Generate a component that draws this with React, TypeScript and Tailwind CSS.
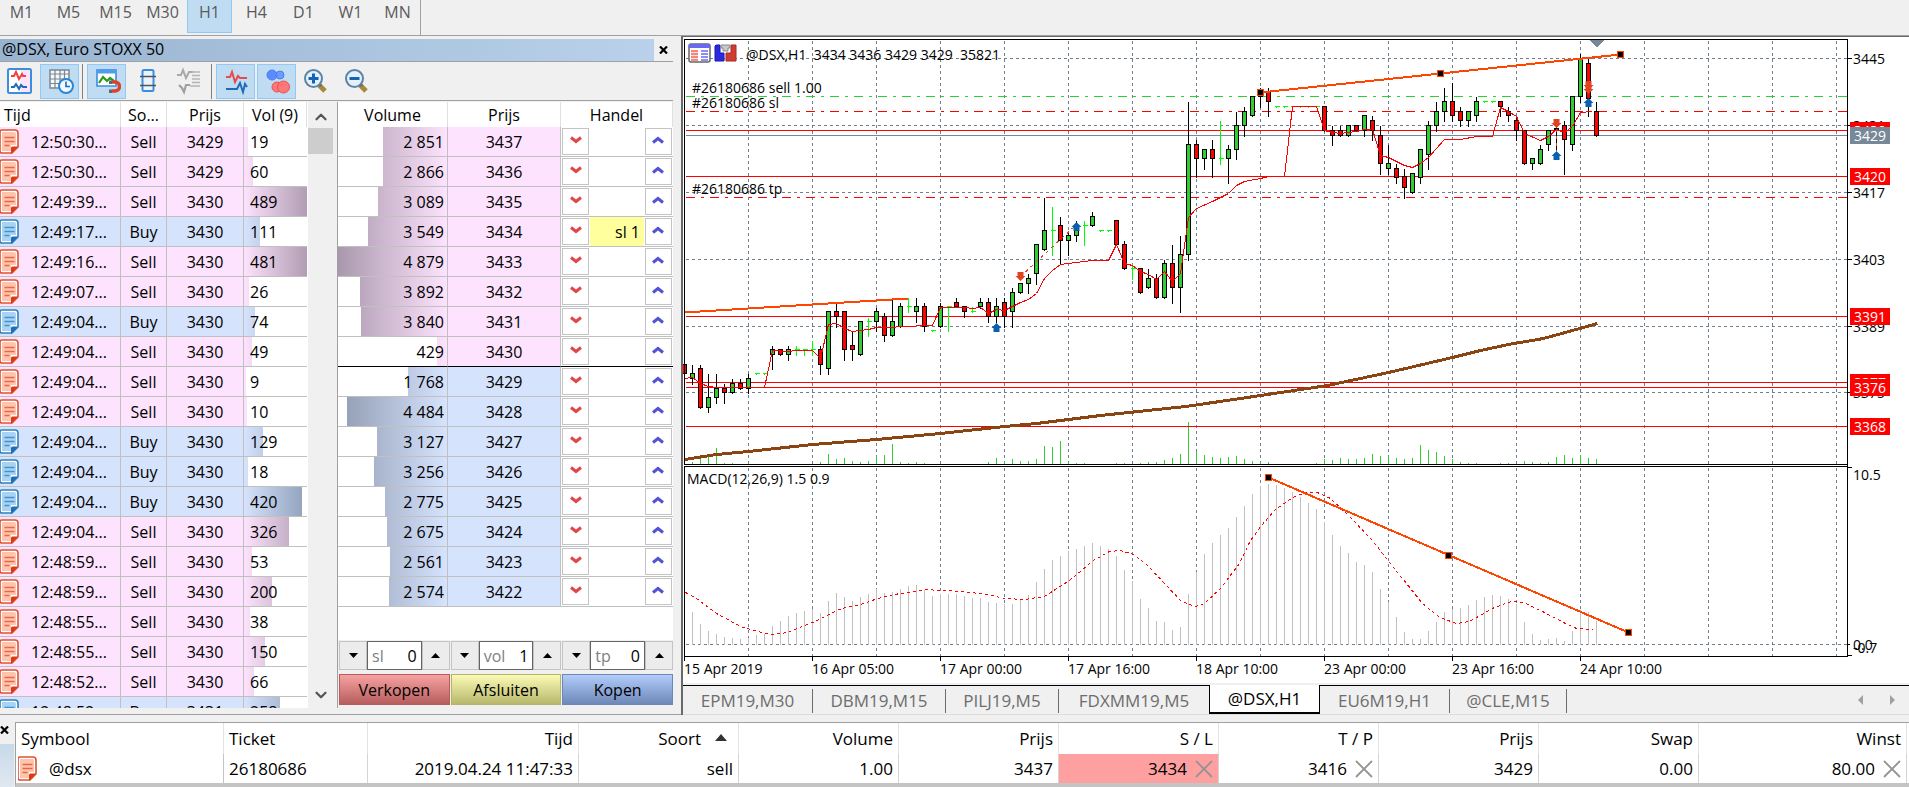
import { ChevronDown, ChevronUp } from 'lucide-react'

type Side = 'Sell' | 'Buy'
type Trade = [time: string, side: Side, price: number, volume: number]

const timeframes = ['M1', 'M5', 'M15', 'M30', 'H1', 'H4', 'D1', 'W1', 'MN']

const trades: Trade[] = [
  ['12:50:30...', 'Sell', 3429, 19],
  ['12:50:30...', 'Sell', 3429, 60],
  ['12:49:39...', 'Sell', 3430, 489],
  ['12:49:17...', 'Buy', 3430, 111],
  ['12:49:16...', 'Sell', 3430, 481],
  ['12:49:07...', 'Sell', 3430, 26],
  ['12:49:04...', 'Buy', 3430, 74],
  ['12:49:04...', 'Sell', 3430, 49],
  ['12:49:04...', 'Sell', 3430, 9],
  ['12:49:04...', 'Sell', 3430, 10],
  ['12:49:04...', 'Buy', 3430, 129],
  ['12:49:04...', 'Buy', 3430, 18],
  ['12:49:04...', 'Buy', 3430, 420],
  ['12:49:04...', 'Sell', 3430, 326],
  ['12:48:59...', 'Sell', 3430, 53],
  ['12:48:59...', 'Sell', 3430, 200],
  ['12:48:55...', 'Sell', 3430, 38],
  ['12:48:55...', 'Sell', 3430, 150],
  ['12:48:52...', 'Sell', 3430, 66],
  ['12:48:52...', 'Buy', 3431, 258],
]

const depth = [
  [2851, 3437], [2866, 3436], [3089, 3435], [3549, 3434],
  [4879, 3433], [3892, 3432], [3840, 3431], [429, 3430],
  [1768, 3429], [4484, 3428], [3127, 3427], [3256, 3426],
  [2775, 3425], [2675, 3424], [2561, 3423], [2574, 3422],
]

const positionColumns = [
  { title: 'Symbool', width: 'w-[208px]', align: 'text-left' },
  { title: 'Ticket', width: 'w-[144px]', align: 'text-left' },
  { title: 'Tijd', width: 'w-[211px]', align: 'text-right' },
  { title: 'Soort', width: 'w-[160px]', align: 'text-right' },
  { title: 'Volume', width: 'w-[160px]', align: 'text-right' },
  { title: 'Prijs', width: 'w-[160px]', align: 'text-right' },
  { title: 'S / L', width: 'w-[160px]', align: 'text-right' },
  { title: 'T / P', width: 'w-[160px]', align: 'text-right' },
  { title: 'Prijs', width: 'w-[160px]', align: 'text-right' },
  { title: 'Swap', width: 'w-[160px]', align: 'text-right' },
  { title: 'Winst', width: 'w-[208px]', align: 'text-right' },
]

const chartTabs = [
  { name: 'EPM19,M30', width: 'w-[130px]' },
  { name: 'DBM19,M15', width: 'w-[133px]' },
  { name: 'PILJ19,M5', width: 'w-[113px]' },
  { name: 'FDXMM19,M5', width: 'w-[150px]' },
  { name: '@DSX,H1', width: 'w-[111px]' },
  { name: 'EU6M19,H1', width: 'w-[130px]' },
  { name: '@CLE,M15', width: 'w-[117px]' },
]

// bar index, type, high, low, body top, body bottom
// type: u = up, d = down, n = open equals close
type Candle = [number, 'u' | 'd' | 'n', number, number, number, number]

const candles: Candle[] = [
  [0, 'd', 364, 374, 364, 374], [1, 'u', 364, 384, 373, 379], [2, 'd', 364, 408, 368, 408],
  [3, 'u', 373, 412, 397, 408], [4, 'u', 373, 403, 388, 398], [5, 'd', 383, 403, 388, 393],
  [6, 'u', 378, 393, 383, 393], [7, 'd', 378, 389, 383, 389], [8, 'u', 373, 393, 378, 389],
  [9, 'n', 373, 374, 373, 373], [10, 'n', 373, 374, 373, 373], [11, 'u', 345, 369, 349, 355],
  [12, 'd', 349, 355, 349, 355], [13, 'u', 345, 360, 349, 355], [14, 'n', 345, 355, 349, 349],
  [15, 'n', 349, 355, 349, 349], [16, 'n', 340, 355, 349, 349], [17, 'd', 345, 374, 349, 365],
  [18, 'u', 311, 374, 311, 369], [19, 'd', 302, 327, 311, 317], [20, 'd', 311, 360, 311, 350],
  [21, 'd', 330, 360, 345, 350], [22, 'u', 321, 355, 321, 355], [23, 'n', 317, 336, 321, 321],
  [24, 'u', 307, 331, 311, 322], [25, 'd', 312, 341, 316, 336], [26, 'u', 297, 336, 321, 336],
  [27, 'u', 302, 327, 306, 327], [28, 'n', 297, 312, 306, 306], [29, 'u', 297, 322, 306, 312],
  [30, 'd', 302, 331, 306, 327], [31, 'n', 330, 331, 330, 330], [32, 'u', 302, 327, 306, 327],
  [33, 'n', 306, 331, 306, 306], [34, 'd', 297, 307, 302, 307], [35, 'd', 306, 317, 306, 312],
  [36, 'n', 306, 312, 311, 311], [37, 'u', 297, 308, 302, 307], [38, 'd', 297, 322, 302, 317],
  [39, 'u', 297, 322, 306, 317], [40, 'd', 297, 327, 302, 317], [41, 'u', 287, 327, 292, 312],
  [42, 'u', 283, 293, 283, 293], [43, 'u', 273, 293, 278, 284], [44, 'u', 244, 284, 244, 274],
  [45, 'u', 197, 250, 230, 250], [46, 'n', 206, 255, 230, 230], [47, 'd', 216, 264, 225, 241],
  [48, 'u', 230, 255, 235, 241], [49, 'u', 220, 241, 230, 236], [50, 'n', 220, 245, 225, 225],
  [51, 'u', 211, 226, 216, 226], [52, 'n', 230, 231, 230, 230], [53, 'n', 230, 231, 230, 230],
  [54, 'd', 220, 245, 220, 245], [55, 'd', 240, 269, 244, 269], [56, 'n', 263, 279, 268, 268],
  [57, 'd', 268, 293, 268, 293], [58, 'u', 268, 288, 278, 288], [59, 'd', 273, 298, 278, 298],
  [60, 'u', 259, 298, 263, 298], [61, 'd', 244, 303, 263, 288], [62, 'u', 235, 312, 254, 288],
  [63, 'u', 101, 260, 144, 255], [64, 'd', 139, 177, 144, 159], [65, 'u', 149, 169, 149, 159],
  [66, 'd', 139, 177, 149, 159], [67, 'n', 120, 164, 158, 158], [68, 'u', 144, 183, 149, 159],
  [69, 'u', 111, 159, 125, 150], [70, 'u', 106, 136, 111, 126], [71, 'u', 96, 116, 96, 116],
  [72, 'u', 87, 107, 92, 97], [73, 'd', 87, 116, 92, 102], [74, 'n', 106, 107, 106, 106],
  [75, 'n', 106, 107, 106, 106], [76, 'n', 106, 107, 106, 106], [77, 'n', 106, 107, 106, 106],
  [78, 'n', 106, 107, 106, 106], [79, 'n', 106, 107, 106, 106], [80, 'd', 106, 131, 106, 131],
  [81, 'd', 125, 145, 130, 136], [82, 'd', 125, 136, 130, 136], [83, 'u', 125, 136, 125, 136],
  [84, 'd', 125, 131, 125, 131], [85, 'u', 115, 136, 115, 131], [86, 'd', 115, 140, 120, 131],
  [87, 'd', 125, 174, 135, 164], [88, 'u', 144, 174, 163, 169], [89, 'd', 163, 183, 168, 178],
  [90, 'd', 168, 198, 176, 188], [91, 'u', 173, 193, 173, 193], [92, 'u', 149, 183, 149, 178],
  [93, 'u', 120, 169, 125, 155], [94, 'u', 101, 131, 111, 126], [95, 'u', 87, 121, 101, 112],
  [96, 'd', 82, 121, 101, 116], [97, 'd', 106, 126, 111, 121], [98, 'u', 111, 126, 111, 121],
  [99, 'u', 96, 121, 101, 116], [100, 'n', 101, 102, 101, 101], [101, 'n', 101, 102, 101, 101],
  [102, 'd', 101, 116, 101, 107], [103, 'd', 106, 121, 111, 116], [104, 'd', 115, 140, 120, 131],
  [105, 'd', 130, 164, 130, 164], [106, 'u', 158, 169, 158, 164], [107, 'u', 144, 164, 149, 164],
  [108, 'u', 130, 150, 130, 145], [109, 'd', 126, 150, 128, 130], [110, 'd', 120, 174, 125, 140],
  [111, 'u', 96, 150, 96, 145], [112, 'u', 53, 102, 58, 97], [113, 'd', 58, 116, 63, 99],
  [114, 'd', 101, 136, 111, 136],
]

// tick volume heights per bar
const volumes = [
  0, 2, 6, 10, 16, 1, 1, 0, 1, 0, 0, 0, 0, 0, 0, 0, 0, 2, 10, 5, 6, 3, 2, 3, 8, 9, 20, 2, 1, 2, 1, 0,
  0, 0, 0, 0, 0, 0, 2, 6, 3, 5, 3, 3, 5, 18, 17, 23, 2, 1, 1, 0, 0, 0, 1, 1, 0, 1, 2, 2, 4, 6, 10, 42, 12,
  9, 7, 6, 7, 8, 5, 3, 2, 2, 0, 0, 0, 0, 0, 1, 5, 4, 6, 5, 5, 6, 10, 8, 7, 6, 5, 6, 19, 14, 12, 8, 5, 2, 1,
  1, 0, 0, 1, 1, 0, 3, 2, 1, 2, 7, 9, 6, 9, 6, 5,
]

// top of each MACD column
const macd = [
  0, 611, 623, 630, 633, 636, 637, 638, 637, 634, 633, 625, 620, 615, 612, 610, 608, 612, 600, 592, 596,
  600, 596, 593, 588, 592, 591, 588, 585, 584, 589, 595, 593, 593, 593, 595, 597, 597, 601, 602, 603, 603,
  599, 594, 581, 568, 559, 555, 550, 548, 545, 542, 545, 548, 555, 569, 580, 598, 607, 620, 621, 629, 626,
  593, 571, 553, 542, 534, 527, 516, 505, 493, 485, 483, 484, 487, 491, 496, 502, 508, 521, 534, 545, 552,
  561, 564, 571, 588, 601, 616, 631, 638, 638, 630, 621, 611, 608, 607, 604, 599, 596, 594, 595, 598, 603,
  621, 633, 639, 638, 637, 640, 630, 609, 611, 620,
]

const fastLine =
  '684,378 692,377 700,383 708,386 716,387 764,387 772,350 788,351 796,350 812,350 820,358 828,324 836,323 844,328 852,331 868,329 876,327 892,327 900,326 932,325 940,307 964,307 972,308 980,307 988,313 996,309 1004,310 1012,306 1020,302 1028,299 1036,293 1044,278 1052,270 1060,264 1076,262 1092,260 1108,260 1116,244 1124,263 1132,265 1140,271 1148,274 1156,279 1164,271 1172,281 1180,273 1188,217 1196,208 1212,201 1228,193 1236,185 1244,181 1260,178 1268,176 1284,176 1292,106 1316,106 1324,130 1332,132 1340,133 1356,131 1364,129 1372,129 1380,155 1388,157 1404,165 1412,167 1420,163 1428,157 1436,148 1444,139 1460,139 1476,136 1492,136 1500,107 1508,111 1516,116 1524,133 1540,140 1548,136 1556,129 1564,132 1572,126 1580,112 1592,111'

const slowLine =
  '684,459 716,454 748,451 812,444 876,439 940,433 1004,426 1036,423 1100,415 1185,406 1240,398 1327,385 1388,372 1452,357 1480,350 1508,344 1543,338 1572,330 1597,323'

const signalLine =
  '685,592 696,598 716,613 740,626 757,631 772,634 787,632 812,622 841,608 864,603 877,598 894,594 925,589 940,590 963,591 986,594 1005,598 1024,599 1044,596 1069,580 1093,560 1109,551 1120,550 1133,554 1147,565 1166,585 1181,601 1195,606 1204,603 1220,588 1239,563 1250,540 1261,525 1275,509 1292,497 1305,492 1317,492 1330,498 1351,518 1372,540 1389,562 1406,583 1422,603 1439,617 1456,623 1469,621 1494,607 1511,601 1523,602 1544,612 1565,623 1576,628 1593,629'

const gridX = Array.from({ length: 18 }, (_, i) => 748 + i * 64)
const gridY = [58, 125, 192, 259, 326, 392]
const levels = [130, 176, 316, 382, 387, 426]

const timeLabels = [
  [684, '15 Apr 2019'], [812, '16 Apr 05:00'], [940, '17 Apr 00:00'], [1068, '17 Apr 16:00'],
  [1196, '18 Apr 10:00'], [1324, '23 Apr 00:00'], [1452, '23 Apr 16:00'], [1580, '24 Apr 10:00'],
] as const

const barX = (i: number) => 684 + i * 8

function formatVolume(v: number) {
  return v < 1000 ? String(v) : `${Math.floor(v / 1000)} ${String(v % 1000).padStart(3, '0')}`
}

function PaperIcon({ side }: { side: Side }) {
  const c = side === 'Sell'
    ? { line: '#e0522f', fill: '#ffc4ae', fold: '#d93a12' }
    : { line: '#2f80c0', fill: '#a9d3f5', fold: '#1d6fb5' }
  return (
    <svg width="19" height="26" viewBox="0 0 19 26" className="block shrink-0" aria-hidden="true">
      <path d="M2 1h13a3 3 0 0 1 3 3v14l-6 6H2a2 2 0 0 1-2-2V3a2 2 0 0 1 2-2z" fill="#fff" stroke={c.line} strokeWidth="1.6" />
      <path d="M2 3h12a2 2 0 0 1 2 2v11h-5v6H2z" fill={c.fill} />
      <path d="M4.500 8.500h10M4.500 12.500h10M4.500 16.500h5" stroke={c.line} strokeWidth="1.600" opacity=".8" />
      <path d="M18 17.500h-5.500a1.500 1.500 0 0 0-1.500 1.500V25z" fill={c.fold} />
    </svg>
  )
}

function CloseGlyph() {
  return (
    <svg width="9" height="8" viewBox="0 0 9 8" aria-hidden="true">
      <path d="M1 0.500l7 7M8 0.500l-7 7" stroke="#000" strokeWidth="2.200" />
    </svg>
  )
}

function RemoveGlyph() {
  return (
    <svg width="18" height="18" viewBox="0 0 18 18" className="shrink-0" aria-hidden="true">
      <path d="M1 1l16 16M17 1L1 17" stroke="#949494" strokeWidth="1.800" />
    </svg>
  )
}

function ToolButton({ label, active, children }: { label: string; active?: boolean; children: React.ReactNode }) {
  return (
    <button
      aria-label={label}
      className={`flex h-[35px] w-[39px] items-center justify-center border ${active ? 'border-[#90c8f6] bg-[#c0dcf3]' : 'border-transparent'}`}
    >
      <svg width="28" height="28" viewBox="0 0 28 28" fill="none" aria-hidden="true">
        {children}
      </svg>
    </button>
  )
}

function Magnifier({ plus }: { plus?: boolean }) {
  return (
    <>
      <path d="M17 18l6 6" stroke="#a58a3c" strokeWidth="5" />
      <path d="M16 16l3 3" stroke="#666" strokeWidth="3" />
      <circle cx="11.500" cy="11.500" r="8.500" fill="#e4f1fc" stroke="#5d83a8" strokeWidth="2" />
      <path d={plus ? 'M6.500 11.500h10M11.500 6.500v10' : 'M6.500 11.500h10'} stroke="#1464b4" strokeWidth="3" />
    </>
  )
}

function DepthToolbar() {
  return (
    <div className="flex h-[38px] items-center">
      <ToolButton label="Tickgrafiek">
        <rect x="2" y="2" width="23" height="24" rx="1.500" fill="#fff" stroke="#3b8de0" strokeWidth="2" />
        <path d="M15 3h9v22h-9z" fill="#fde3fd" />
        <path d="M5 9h3l2-4 3 7 3-5 1 2h3" stroke="#f04040" strokeWidth="2" />
        <path d="M5 20h3l2-3 3 5 2-4 2 2h4" stroke="#1c6cb8" strokeWidth="2" />
      </ToolButton>
      <div className="w-px" />
      <ToolButton label="Tijd en verkopen" active>
        <path d="M4 3h19v18H4z" fill="#f6f8fa" stroke="#7a8792" strokeWidth="1.500" />
        <path d="M4 7h19M4 12h19M4 16.500h19M9 3v18M14 3v18M18.500 3v18" stroke="#7a8792" strokeWidth="1.200" />
        <circle cx="20" cy="19" r="7" fill="#f2f8ff" stroke="#2a86d8" strokeWidth="2" />
        <path d="M20 14.500V19.500h4" stroke="#1c6cc0" strokeWidth="1.600" />
      </ToolButton>
      <div className="ml-[3px] mr-1 h-[35px] w-px bg-[#808080]" />
      <ToolButton label="Automatisch centreren" active>
        <path d="M4 3h19v16H4z" fill="#fff" stroke="#3b8de0" strokeWidth="1.600" />
        <path d="M4 2h19v4.500H4z" fill="#4f9cea" />
        <path d="M6 16l4-6 4 4 3-3 4 3" stroke="#2a9a1c" strokeWidth="2.200" />
        <path d="M19 15h3a4 4 0 0 1 0 9h-3" stroke="#d8432a" strokeWidth="3.500" />
        <path d="M16 13.500h3v3.500h-3zM16 22.500h3v3.500h-3z" fill="#666" />
      </ToolButton>
      <div className="w-0.5" />
      <ToolButton label="Marktdiepte">
        <rect x="8.500" y="3" width="11" height="21" rx="1.500" fill="#eaf4fe" stroke="#3b8de0" strokeWidth="2" />
        <path d="M6 9.500h16M6 18.500h16" stroke="#555" strokeWidth="1.600" />
      </ToolButton>
      <div className="w-0.5" />
      <ToolButton label="Spread">
        <path d="M2 8h4l2-5 3 8 3-6h4" stroke="#a8a8a8" strokeWidth="2" />
        <path d="M4 18l3 3 2 4 2-7h4" stroke="#a0a0a0" strokeWidth="2.200" />
        <path d="M17 5h8M17 8.500h8M17 12h8M17 15.500h8M15 19h10" stroke="#b4b4b4" strokeWidth="1.500" />
      </ToolButton>
      <div className="ml-[3px] mr-1 h-[35px] w-px bg-[#808080]" />
      <ToolButton label="Ticks" active>
        <path d="M4 10h4l2-5 3 10 3-6 2 2h7" stroke="#e84a4a" strokeWidth="2" />
        <path d="M4 22h11l3-6 3 9 2-8 2 3" stroke="#1c6cb8" strokeWidth="2" />
      </ToolButton>
      <div className="w-0.5" />
      <ToolButton label="Volumes" active>
        <circle cx="17" cy="8" r="4" fill="#6b9cff" stroke="#4a7ef0" />
        <circle cx="9" cy="8" r="5" fill="#5a8cff" stroke="#4a7ef0" />
        <circle cx="14" cy="20" r="5" fill="#ff7878" stroke="#e85050" />
        <circle cx="20.500" cy="20" r="6" fill="#ff7878" stroke="#e85050" />
      </ToolButton>
      <ToolButton label="Inzoomen"><Magnifier plus /></ToolButton>
      <div className="w-0.5" />
      <ToolButton label="Uitzoomen"><Magnifier /></ToolButton>
    </div>
  )
}

function TradeList() {
  return (
    <div className="flex w-[333px] shrink-0 overflow-hidden bg-white">
      <table className="w-[307px] table-fixed border-separate border-spacing-0 self-start">
        <thead>
          <tr className="h-[25px]">
            <th className="w-[121px] border-r border-[#e0e0e0] pl-1 text-left font-normal">Tijd</th>
            <th className="w-[46px] border-r border-[#e0e0e0] font-normal">So...</th>
            <th className="w-[77px] border-r border-[#e0e0e0] font-normal">Prijs</th>
            <th className="border-r border-[#e0e0e0] font-normal">Vol (9)</th>
          </tr>
        </thead>
        <tbody>
          {trades.map(([time, side, price, volume], i) => {
            const cell = `border-b border-r border-[#c0c0c0] ${side === 'Sell' ? 'bg-[#fde3fd]' : 'bg-[#d6e3fd]'}`
            const width = Math.min(100, volume / 4.7 + 2)
            const shade = side === 'Sell' ? '#fde3fd, #b09cb3' : '#d6e3fd, #8f9fba'
            return (
              <tr key={i} className="h-[30px]">
                <td className={cell}>
                  <span className="flex items-center">
                    <PaperIcon side={side} />
                    <span className="pl-3">{time}</span>
                  </span>
                </td>
                <td className={`${cell} text-center`}>{side}</td>
                <td className={`${cell} text-center`}>{price}</td>
                <td
                  className="border-b border-[#c0c0c0] pl-1.5"
                  style={{ backgroundImage: `linear-gradient(90deg, transparent ${width}%, #fff ${width}%), linear-gradient(90deg, ${shade})` }}
                >
                  {volume}
                </td>
              </tr>
            )
          })}
        </tbody>
      </table>
      <div className="ml-px flex flex-1 flex-col items-center bg-[#f0f0f0]">
        <button aria-label="Omhoog" className="flex h-[26px] items-center pt-1"><ChevronUp size={18} strokeWidth={3} color="#555" /></button>
        <div className="h-[26px] w-full bg-[#cdcdcd]" />
        <div className="flex-1" />
        <button aria-label="Omlaag" className="flex h-[26px] items-center"><ChevronDown size={18} strokeWidth={3} color="#555" /></button>
      </div>
    </div>
  )
}

function Spinner({ name, value }: { name: string; value: string }) {
  const arrow = 'flex w-7 items-center justify-center border border-[#c4c4c4] bg-[#ececec]'
  return (
    <div className="flex h-[29px] flex-1">
      <button aria-label={`${name} lager`} className={arrow}>
        <svg width="9" height="5" viewBox="0 0 9 5"><path d="M0 0h9L4.500 5z" /></svg>
      </button>
      <label className="flex min-w-0 flex-1 items-center border border-[#646464] bg-white px-1 text-[#808080]">
        {name}
        <input defaultValue={value} className="w-full min-w-0 bg-transparent text-right text-black outline-none" />
      </label>
      <button aria-label={`${name} hoger`} className={arrow}>
        <svg width="9" height="5" viewBox="0 0 9 5"><path d="M0 5h9L4.500 0z" /></svg>
      </button>
    </div>
  )
}

function DepthOfMarket() {
  return (
    <div className="flex min-w-0 flex-1 flex-col border-l border-[#a0a0a0] bg-white">
      <table className="w-full table-fixed border-separate border-spacing-0">
        <colgroup>
          <col className="w-[110px]" />
          <col className="w-[113px]" />
          <col className="w-[29px]" />
          <col />
          <col className="w-[29px]" />
        </colgroup>
        <thead>
          <tr className="h-[25px]">
            <th className="border-r border-[#e0e0e0] font-normal">Volume</th>
            <th className="border-r border-[#e0e0e0] font-normal">Prijs</th>
            <th colSpan={3} className="border-r border-[#e0e0e0] font-normal">Handel</th>
          </tr>
        </thead>
        <tbody>
          {depth.map(([volume, price], i) => {
            const ask = i < 8
            const line = i === 7 ? 'border-b border-b-black' : 'border-b border-b-[#c0c0c0]'
            const rest = 100 - (volume / 4879) * 100
            const shade = ask ? '#a998ad, #fde3fd' : '#919cb2, #d6e3fd'
            return (
              <tr key={price} className="h-[30px]">
                <td
                  className={`${line} border-r border-r-[#c0c0c0] pr-[3px] text-right`}
                  style={{ backgroundImage: `linear-gradient(90deg, #fff ${rest}%, transparent ${rest}%), linear-gradient(90deg, ${shade})` }}
                >
                  {formatVolume(volume)}
                </td>
                <td className={`${line} border-r border-r-[#c0c0c0] text-center ${ask ? 'bg-[#fde3fd]' : 'bg-[#d6e3fd]'}`}>{price}</td>
                <td className={`${line} pl-px`}>
                  <button aria-label={`Verkopen op ${price}`} className="flex h-[27px] w-[27px] items-center justify-center border border-[#c4c4c4] pb-1">
                    <svg width="12" height="8" viewBox="0 0 12 8" fill="none"><path d="M1 1.500l5 4 5-4" stroke="#e04848" strokeWidth="3" /></svg>
                  </button>
                </td>
                <td className={`${line} pr-1 text-right ${price === 3434 ? 'bg-[#ffff9e]' : ''}`}>{price === 3434 ? 'sl 1' : ''}</td>
                <td className={`${line} pl-px`}>
                  <button aria-label={`Kopen op ${price}`} className="flex h-[27px] w-[27px] items-center justify-center border border-[#c4c4c4] pb-1">
                    <svg width="12" height="8" viewBox="0 0 12 8" fill="none"><path d="M1 6.500l5-4 5 4" stroke="#5252d4" strokeWidth="3" /></svg>
                  </button>
                </td>
              </tr>
            )
          })}
        </tbody>
      </table>
      <div className="flex-1" />
      <div className="flex flex-col gap-1 bg-[#f0f0f0] pb-[3px] pl-px pt-px">
        <div className="flex gap-px">
          <Spinner name="sl" value="0" />
          <Spinner name="vol" value="1" />
          <Spinner name="tp" value="0" />
        </div>
        <div className="flex gap-px">
          <button className="h-[31px] flex-1 border border-[#bb5a5a] bg-linear-to-b from-[#f7a2a2] to-[#b65e5e]">Verkopen</button>
          <button className="h-[31px] flex-1 border border-[#b4b46c] bg-linear-to-b from-[#fbfbb6] to-[#b8b86c]">Afsluiten</button>
          <button className="h-[31px] flex-1 border border-[#6c86b6] bg-linear-to-b from-[#b2ccfc] to-[#6e88b8]">Kopen</button>
        </div>
      </div>
    </div>
  )
}

function Handle({ x, y }: { x: number; y: number }) {
  return <rect x={x - 3} y={y - 3} width="6" height="6" fill="#000" stroke="#ff4500" />
}

function Arrow({ x, y, up }: { x: number; y: number; up?: boolean }) {
  return up
    ? <path d={`M${x - 5} ${y + 1}L${x} ${y - 4}l5 5h-2v4h-6v-4z`} fill="#0a5fb0" />
    : <path d={`M${x - 5} ${y - 1}L${x} ${y + 4}l5-5h-2v-4h-6v4z`} fill="#e0431f" />
}

function PriceTag({ y, text, color }: { y: number; text: string; color: string }) {
  return (
    <>
      <rect x="1850" y={y - 8} width="40" height="17" fill={color} />
      <text x="1854" y={y + 6} fill="#fff">{text}</text>
    </>
  )
}

function Chart() {
  return (
    <svg viewBox="683 37 1226 646" className="block w-full bg-white" role="img" aria-label="@DSX,H1" fontSize="14">
      <g transform="translate(.5 .5)" shapeRendering="crispEdges" fill="none">
        <g stroke="#708090" strokeDasharray="3 3">
          {gridX.map((x) => <path key={x} d={`M${x} 40V463M${x} 467V655`} />)}
          {gridY.map((y) => <path key={y} d={`M685 ${y}H1846`} />)}
          <path d="M685 644H1846" />
        </g>
        <g stroke="#32cd32">
          {volumes.map((h, i) => h > 0 && <path key={i} d={`M${barX(i)} ${463 - h}V463`} />)}
        </g>
        <path d="M685 96H1846" stroke="#32cd32" strokeDasharray="9 6 3 6" />
        <path d="M685 111H1846M685 197H1846" stroke="#f00" strokeDasharray="9 6 3 6" />
        <path d="M685 135H1846" stroke="#778899" />
        {levels.map((y) => <path key={y} d={`M685 ${y}H1846`} stroke="#f00" />)}
        <polyline points={slowLine} stroke="#8b4513" strokeWidth="3" />
        {candles.map(([i, type, high, low, top, bottom]) => {
          const x = barX(i)
          if (type === 'n') {
            return <path key={i} d={`M${x} ${high}V${low}M${x - 2} ${top}h5`} stroke="#0f0" />
          }
          return (
            <g key={i} stroke="#000">
              <path d={`M${x} ${high}V${low}`} />
              <rect x={x - 2} y={top} width="4" height={Math.max(1, bottom - top - 1)} fill={type === 'u' ? '#32cd32' : '#f00'} />
            </g>
          )
        })}
        <polyline points={fastLine} stroke="#f00" />
        <g stroke="#ff4500" strokeWidth="2">
          <path d="M684 312L908 298M1260 92L1620 54" />
        </g>
        <path d="M1020 276L1076 224M1556 128V150" stroke="#e0431f" strokeDasharray="3 4" />

        <g stroke="#c0c0c0">
          {macd.map((y, i) => y > 0 && <path key={i} d={`M${barX(i)} ${y}V644`} />)}
        </g>
        <polyline points={signalLine} stroke="#f00" strokeDasharray="3 3" />
        <path d="M1268 477L1628 632" stroke="#ff4500" strokeWidth="2" />

        <g stroke="#000">
          <path d="M1847 464H684V39H1847V656M1847 466H684V656H1847" />
          {gridY.map((y) => <path key={y} d={`M1847 ${y}h4`} />)}
          <path d="M1847 467h4M1847 655h4M1847 644h2" />
          {timeLabels.map(([x]) => <path key={x} d={`M${x} 656v4`} />)}
        </g>
        <path d="M1588 39h16l-8 8z" fill="#778899" />
        <Handle x={1260} y={92} />
        <Handle x={1440} y={73} />
        <Handle x={1620} y={54} />
        <Handle x={1268} y={477} />
        <Handle x={1448} y={555} />
        <Handle x={1628} y={632} />
      </g>

      <Arrow x={1020.500} y={277} />
      <Arrow x={996.500} y={327} up />
      <Arrow x={1076.500} y={226} up />
      <Arrow x={1556.500} y={124} />
      <Arrow x={1556.500} y={155} up />
      <Arrow x={1588.500} y={86} />
      <Arrow x={1588.500} y={90} />
      <Arrow x={1588.500} y={102} up />

      <g fill="#000">
        <text x="746" y="60" xmlSpace="preserve">@DSX,H1  3434 3436 3429 3429  35821</text>
        <text x="692" y="93">#26180686 sell 1.00</text>
        <text x="692" y="108">#26180686 sl</text>
        <text x="692" y="194">#26180686 tp</text>
        <text x="687" y="484">MACD(12,26,9) 1.5 0.9</text>
        {timeLabels.map(([x, label]) => <text key={x} x={x} y="674">{label}</text>)}
        <text x="1853" y="64">3445</text>
        <text x="1853" y="131">3431</text>
        <text x="1853" y="198">3417</text>
        <text x="1853" y="265">3403</text>
        <text x="1853" y="332">3389</text>
        <text x="1853" y="398">3375</text>
        <text x="1853" y="480">10.5</text>
        <text x="1853" y="650">0.0</text>
        <text x="1853" y="653">-0.7</text>
      </g>
      <PriceTag y={130} text="3430" color="#f00" />
      <PriceTag y={135} text="3429" color="#778899" />
      <PriceTag y={176} text="3420" color="#f00" />
      <PriceTag y={316} text="3391" color="#f00" />
      <PriceTag y={382} text="3377" color="#f00" />
      <PriceTag y={387} text="3376" color="#f00" />
      <PriceTag y={426} text="3368" color="#f00" />

      <g>
        <rect x="689" y="44" width="21" height="18" rx="2" fill="#fff" stroke="#666" strokeWidth="1.500" />
        <path d="M689 44h21v4h-21z" fill="#6a6af0" />
        <path d="M691 50h7v10h-7z" fill="#fde0e0" />
        <path d="M691 51h7M691 54h7M691 57h7M691 60h7" stroke="#f06a5a" strokeWidth="1.500" />
        <path d="M701 51h7M701 54h7M701 57h7M701 60h7" stroke="#6a6af0" strokeWidth="1.500" />
        <path d="M716 45h4v8h4v8h-9V46z" fill="#2a2ae0" stroke="#1818b0" />
        <path d="M731 45h5v16h-10v-8h5z" fill="#d03c34" stroke="#a82a24" />
        <path d="M721 45h9v3h-2v3h-5v-3h-2z" fill="#c8c8c8" stroke="#888" />
      </g>
    </svg>
  )
}

function ChartTabs() {
  return (
    <div className="flex h-8 items-start border-b border-[#dcdcdc] bg-[#f0f0f0] pt-0.5 text-[17px]">
      {chartTabs.map((tab, i) => (
        <button
          key={tab.name}
          className={`flex h-[29px] items-center justify-center border-black pt-px ${tab.width} ${
            i === 4 ? 'border-x border-b-2 bg-white' : 'border-t text-[#6d6d6d]'
          }`}
        >
          <span className={`flex-1 ${i === 3 || i === 4 ? '' : 'border-r border-[#6d6d6d]'}`}>{tab.name}</span>
        </button>
      ))}
      <div className="flex h-[29px] flex-1 items-center justify-end gap-[27px] border-t border-black pr-3.5">
        <button aria-label="Vorige tabs"><svg width="5" height="10" viewBox="0 0 5 10" fill="#a0a0a0"><path d="M5 0v10L0 5z" /></svg></button>
        <button aria-label="Volgende tabs"><svg width="5" height="10" viewBox="0 0 5 10" fill="#a0a0a0"><path d="M0 0v10l5-5z" /></svg></button>
      </div>
    </div>
  )
}

function Positions() {
  const cell = 'border-r border-[#d4d4d4] px-[5px] text-right'
  return (
    <section className="flex bg-[#f0f0f0] pt-[7px] text-[17px]">
      <div className="flex w-[15px] shrink-0 flex-col">
        <button aria-label="Sluiten" className="flex h-[22px] items-start pt-1"><CloseGlyph /></button>
        <div className="mr-px flex-1 bg-linear-to-b from-[#c8d9ea] to-[#e0e8f0]" />
      </div>
      <div className="min-w-0 flex-1 border-b-4 border-l border-t border-b-[#c4c4c4] border-l-[#a0a0a0] border-t-[#a0a0a0] bg-white pr-[3px]">
        <table className="w-full table-fixed border-separate border-spacing-0">
          <thead>
            <tr className="h-[31px]">
              {positionColumns.map((col, i) => (
                <th key={i} className={`${col.width} ${col.align} border-r border-[#e4e4e4] px-[5px] font-normal`}>
                  {col.title}
                  {col.title === 'Soort' && (
                    <svg width="12" height="7" viewBox="0 0 12 7" className="mb-1 ml-3.5 mr-1.5 inline-block" aria-hidden="true">
                      <path d="M6 0l6 7H0z" fill="#333" />
                    </svg>
                  )}
                </th>
              ))}
            </tr>
          </thead>
          <tbody>
            <tr className="h-[29px]">
              <td className="border-r border-[#c4c4c4] pl-0.5">
                <span className="flex items-center"><PaperIcon side="Sell" /><span className="pl-3">@dsx</span></span>
              </td>
              <td className="border-r border-[#d4d4d4] px-[5px]">26180686</td>
              <td className={cell}>2019.04.24 11:47:33</td>
              <td className={cell}>sell</td>
              <td className={cell}>1.00</td>
              <td className={cell}>3437</td>
              <td className={`${cell} bg-[#ffa0a0]`}><span className="flex items-center justify-end gap-2">3434<RemoveGlyph /></span></td>
              <td className={cell}><span className="flex items-center justify-end gap-2">3416<RemoveGlyph /></span></td>
              <td className={cell}>3429</td>
              <td className={cell}>0.00</td>
              <td className={cell}><span className="flex items-center justify-end gap-2">80.00<RemoveGlyph /></span></td>
            </tr>
          </tbody>
        </table>
      </div>
    </section>
  )
}

export default function App() {
  return (
    <div className="flex min-h-screen flex-col bg-[#f0f0f0] font-['Open_Sans','Noto_Sans',sans-serif] text-base leading-6 text-black">
      <header className="flex h-9 border-b border-[#a0a0a0] text-[#5a5a5a]">
        <nav className="-ml-px flex h-[35px] gap-0.5 border-r border-[#a0a0a0]">
          {timeframes.map((tf) => (
            <button
              key={tf}
              className={`h-[33px] w-[45px] border border-t-0 pb-2 ${tf === 'H1' ? 'border-[#90c8f6] bg-[#c0dcf3]' : 'border-transparent'}`}
            >
              {tf}
            </button>
          ))}
        </nav>
      </header>

      <main className="flex">
        <aside className="flex w-[681px] shrink-0 flex-col border-b border-[#a0a0a0] pb-1.5 pr-2 pt-[3px]">
          <div className="flex h-[22px] items-center">
            <h1 className="h-full flex-1 bg-linear-to-r from-[#99b4d1] to-[#b9d1ea] pl-0.5 leading-5">@DSX, Euro STOXX 50</h1>
            <button aria-label="Sluiten" className="flex w-[19px] justify-center"><CloseGlyph /></button>
          </div>
          <div className="border-y border-[#a0a0a0]">
            <DepthToolbar />
          </div>
          <div className="mt-px flex h-[606px] gap-1">
            <TradeList />
            <DepthOfMarket />
          </div>
        </aside>
        <section className="min-w-0 flex-1 border-l-2 border-t border-[#696969] bg-white">
          <Chart />
          <ChartTabs />
        </section>
      </main>

      <Positions />
    </div>
  )
}
